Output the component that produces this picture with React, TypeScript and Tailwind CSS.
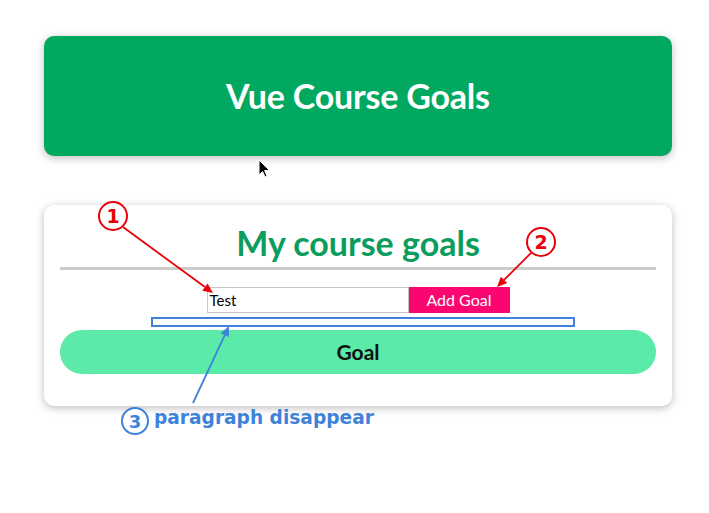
import React from "react";

function Arrow({ x1, y1, x2, y2, color }: { x1: number; y1: number; x2: number; y2: number; color: string }) {
  const ang = Math.atan2(y2 - y1, x2 - x1);
  const L = 10;
  const W = 4.5;
  const bx = x2 - L * Math.cos(ang);
  const by = y2 - L * Math.sin(ang);
  const px = -Math.sin(ang) * W;
  const py = Math.cos(ang) * W;
  return (
    <g>
      <line x1={x1} y1={y1} x2={bx} y2={by} stroke={color} strokeWidth={1.8} />
      <polygon points={`${x2},${y2} ${bx + px},${by + py} ${bx - px},${by - py}`} fill={color} />
    </g>
  );
}

export default function App() {
  return (
    <div className="relative w-[709px] h-[513px] bg-white overflow-hidden" style={{ fontFamily: "Lato, 'Open Sans', sans-serif" }}>
      <header className="ml-[44px] mt-[36px] w-[628px] h-[120px] rounded-[10px] bg-[#00a95f] shadow-[0_2px_8px_rgba(0,0,0,0.26)] flex items-center justify-center">
        <h1 className="text-white font-bold text-[34px] leading-none tracking-[-0.2px] -mt-[1px]">Vue Course Goals</h1>
      </header>

      <section className="ml-[44px] mt-[49px] w-[628px] h-[201px] rounded-[10px] bg-white shadow-[0_2px_8px_rgba(0,0,0,0.26)] px-4 pt-[18px] flex flex-col">
        <h2 className="text-center text-[#0c9d5e] font-bold text-[34px] leading-[40px]">My course goals</h2>
        <div className="mt-[4px] h-[3px] bg-[#cccccc]" />
        <div className="mt-[17px] flex justify-center">
          <div className="w-[202px] h-[26px] border border-[#c6c6c6] flex items-center px-[2px] text-[15px] text-black">Test</div>
          <div className="w-[101px] h-[26px] bg-[#fb0670] text-white text-[16px] flex items-center justify-center">Add Goal</div>
        </div>
        <div className="mt-[4px] ml-[91px] w-[424px] h-[10px] border-2 border-[#3f82d9]" />
        <div className="mt-[3px] h-[44px] rounded-full bg-[#5beaa7] flex items-center justify-center text-[21px] font-bold text-[#111]">Goal</div>
      </section>

      <svg className="absolute inset-0 pointer-events-none" width={709} height={513} viewBox="0 0 709 513">
        <circle cx={113} cy={216} r={14} fill="white" stroke="#e8000b" strokeWidth={2} />
        <text x={113} y={223} textAnchor="middle" fill="#e8000b" fontFamily="'DejaVu Sans', sans-serif" fontWeight="bold" fontSize={19}>1</text>
        <Arrow x1={123} y1={227} x2={213} y2={293} color="#e8000b" />

        <circle cx={541} cy={242} r={14} fill="white" stroke="#e8000b" strokeWidth={2} />
        <text x={541} y={249} textAnchor="middle" fill="#e8000b" fontFamily="'DejaVu Sans', sans-serif" fontWeight="bold" fontSize={19}>2</text>
        <Arrow x1={531} y1={253} x2={497} y2={287} color="#e8000b" />

        <Arrow x1={193} y1={403} x2={229} y2={326} color="#3f82d9" />
        <circle cx={135} cy={421} r={13} fill="white" stroke="#3f82d9" strokeWidth={2} />
        <text x={135} y={428} textAnchor="middle" fill="#3f82d9" fontFamily="'DejaVu Sans', sans-serif" fontWeight="bold" fontSize={18}>3</text>
        <text x={154} y={424} fill="#3f82d9" fontFamily="'DejaVu Sans', sans-serif" fontWeight="bold" fontSize={18.6}>paragraph disappear</text>

        <path d="M259 160 L259 175 L262.5 171.5 L265 177 L267 176 L264.6 170.6 L269.5 170.5 Z" fill="black" stroke="white" strokeWidth={1} />
      </svg>
    </div>
  );
}
